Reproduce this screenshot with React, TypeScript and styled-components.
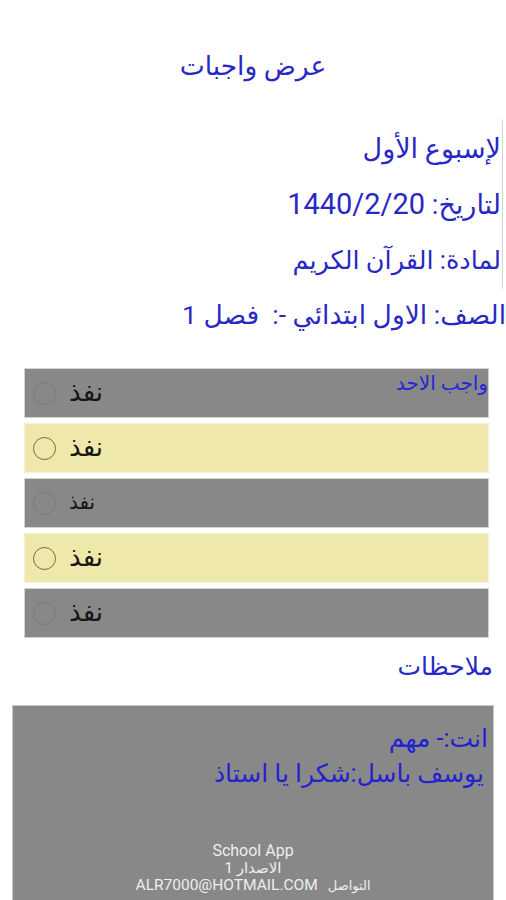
import React from "react";
import styled, { createGlobalStyle } from "styled-components";

const Global = createGlobalStyle`
  html, body { margin: 0; padding: 0; background: #ffffff; }
  body { font-family: Roboto, "DejaVu Sans", sans-serif; }
`;

const Page = styled.div`
  width: 506px;
  height: 900px;
  overflow: hidden;
  display: flex;
  flex-direction: column;
  direction: rtl;
  font-family: Roboto, "DejaVu Sans", sans-serif;
`;

const Title = styled.h1`
  margin: 0;
  padding-top: 48px;
  box-sizing: border-box;
  height: 119px;
  text-align: center;
  font-size: 26.5px;
  font-weight: normal;
  color: #2828c4;
  line-height: 36px;
`;

const InfoBox = styled.div`
  margin-right: 3px;
  width: 280px;
  align-self: flex-start;
  box-sizing: border-box;
  height: 171px;
  border-right: 1px solid #d4d4d4;
  border-top-right-radius: 4px;
  border-bottom-right-radius: 4px;
  padding: 11px 1px 0 0;
  display: flex;
  flex-direction: column;
  gap: 17px;
`;

const InfoLine = styled.div`
  font-size: 27px;
  line-height: 38px;
  color: #2828c4;
  white-space: nowrap;
`;

const Digits = styled.span`
  font-size: 29px;
`;

const SubjectLine = styled(InfoLine)`
  font-size: 25.5px;
`;

const ClassLine = styled(InfoLine)`
  margin-top: 6px;
  font-size: 26.5px;
  white-space: pre;
`;

const List = styled.div`
  margin-top: 35px;
  display: flex;
  flex-direction: column;
  gap: 7px;
  padding-right: 18px;
  width: 463px;
`;

const Row = styled.div<{ $done: boolean }>`
  height: 48px;
  background: ${(p) => (p.$done ? "#eee8aa" : "#888888")};
  box-shadow: 0 0 0 1px ${(p) => (p.$done ? "#f6f3d8" : "#d2d2d2")};
  display: flex;
  align-items: center;
  direction: ltr;
  padding-left: 8px;
  gap: 13px;
  position: relative;
`;

const Radio = styled.span<{ $done: boolean }>`
  width: 23px;
  height: 23px;
  border-radius: 50%;
  box-sizing: border-box;
  border: 1.5px solid ${(p) => (p.$done ? "#6e6a55" : "#7a7a7a")};
`;

const Done = styled.span<{ $small?: boolean }>`
  font-size: ${(p) => (p.$small ? "20px" : "26px")};
  color: #151515;
  font-family: "DejaVu Sans", sans-serif;
  direction: rtl;
  margin-top: -3px;
`;

const DayLabel = styled.span`
  position: absolute;
  top: 2px;
  right: 0;
  font-size: 20px;
  line-height: 24px;
  color: #2525d8;
  direction: rtl;
`;

const NotesTitle = styled.div`
  margin-top: 13px;
  padding-right: 13px;
  font-size: 25px;
  line-height: 34px;
  color: #2828c4;
`;

const NotesBox = styled.div`
  margin-top: 22px;
  margin-right: 13px;
  width: 480px;
  flex: 1;
  background: #888888;
  box-shadow: 0 0 0 1px #c8c8c8;
  display: flex;
  flex-direction: column;
  padding-top: 15px;
`;

const Note = styled.div<{ $indent?: number }>`
  padding-right: ${(p) => p.$indent ?? 5}px;
  font-size: 25px;
  line-height: 35px;
  color: #2222d0;
`;

const Footer = styled.div`
  margin-top: 51px;
  display: flex;
  flex-direction: column;
  align-items: center;
  color: #eeeeee;
  font-size: 15px;
  line-height: 17.5px;
`;

const FooterTitle = styled.div`
  font-size: 16px;
`;

const Contact = styled.div`
  display: flex;
  gap: 10px;
  align-items: center;
  direction: rtl;
  font-size: 15.5px;
`;

const ContactLabel = styled.span`
  font-size: 13px;
`;

const rows = [
  { done: false, label: "واجب الاحد" },
  { done: true },
  { done: false, small: true },
  { done: true },
  { done: false },
];

export default function App() {
  return (
    <>
      <Global />
      <Page>
        <Title>عرض واجبات</Title>
        <InfoBox>
          <InfoLine>لإسبوع الأول</InfoLine>
          <InfoLine>
            لتاريخ: <Digits>1440/2/20</Digits>
          </InfoLine>
          <SubjectLine>لمادة: القرآن الكريم</SubjectLine>
        </InfoBox>
        <ClassLine>الصف: الاول ابتدائي -:  فصل 1</ClassLine>
        <List>
          {rows.map((r, i) => (
            <Row key={i} $done={r.done}>
              <Radio $done={r.done} />
              <Done $small={r.small}>نفذ</Done>
              {r.label && <DayLabel>{r.label}</DayLabel>}
            </Row>
          ))}
        </List>
        <NotesTitle>ملاحظات</NotesTitle>
        <NotesBox>
          <Note>انت:- مهم</Note>
          <Note $indent={9}>يوسف باسل:شكرا يا استاذ</Note>
          <Footer>
            <FooterTitle>School App</FooterTitle>
            <div>الاصدار 1</div>
            <Contact>
              <ContactLabel>التواصل</ContactLabel>
              <span>ALR7000@HOTMAIL.COM</span>
            </Contact>
          </Footer>
        </NotesBox>
      </Page>
    </>
  );
}
